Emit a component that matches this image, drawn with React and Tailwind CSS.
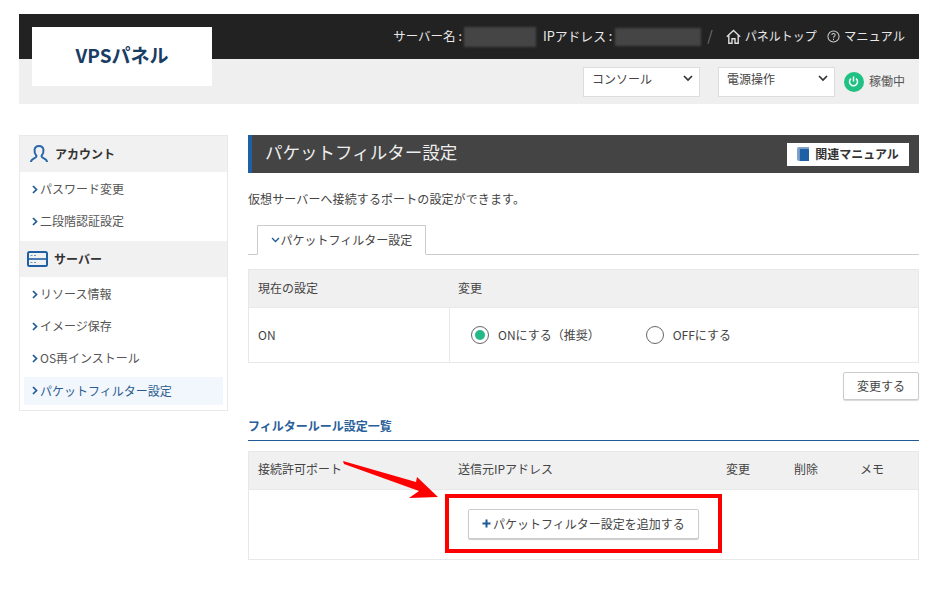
import React from "react";

function Chevron() {
  return (
    <svg width="6" height="9" viewBox="0 0 6 9" fill="none">
      <path d="M1 1l3.500 3.500L1 8" stroke="#1f5a96" strokeWidth="1.700" />
    </svg>
  );
}

function NavItem({ label, active }) {
  return (
    <div className={`flex items-center h-[28px] mx-[4px] pl-[8px] gap-[2px] text-[12px] ${active ? "bg-[#f2f7fd] text-[#2b5c8f] pb-[1px]" : "text-[#555] pb-[2px]"}`}>
      <Chevron />
      <span>{label}</span>
    </div>
  );
}

function Caret() {
  return (
    <svg width="10" height="7" viewBox="0 0 10 7" fill="none">
      <path d="M1 1l4 4 4-4" stroke="#333" strokeWidth="1.700" />
    </svg>
  );
}

function Select({ label }) {
  return (
    <div className="w-[117px] h-[30px] bg-white border border-[#ddd] flex items-center justify-between pl-[8px] pr-[6px] pb-[6px] text-[12px] text-[#444]">
      <span>{label}</span>
      <Caret />
    </div>
  );
}

function Radio({ checked, label }) {
  return (
    <div className="flex items-center gap-[9px]">
      <span className="w-[18px] h-[18px] rounded-full border border-[#666] flex items-center justify-center bg-white">
        {checked && <span className="w-[10px] h-[10px] rounded-full bg-[#25b98a]" />}
      </span>
      <span className="pb-[1px]">{label}</span>
    </div>
  );
}

export default function App() {
  return (
    <div className="relative w-[936px] h-[594px] bg-white overflow-hidden text-[#444] font-['Noto_Sans_CJK_JP','Noto_Sans',sans-serif]">
      <div className="pt-[14px] pl-[19px] w-[936px]">
        {/* Header */}
        <header className="relative w-[900px]">
          <div className="h-[45px] bg-[#222] flex items-center justify-end pr-[14px] text-[12px] text-[#e8e8e8]">
            <span className="pb-[1px] text-[12.500px]">サーバー名 :</span>
            <span className="w-[72px] h-[20px] bg-[#454545] blur-[1px] ml-[2px] mr-[7px]" />
            <span className="pb-[1px] text-[12.800px]">IPアドレス :</span>
            <span className="w-[86px] h-[18px] bg-[#454545] blur-[1px] ml-[3px]" />
            <span className="text-[#777] ml-[6px] mr-[13px] text-[14px] pb-[2px]">/</span>
            <svg width="15" height="15" viewBox="0 0 15 15" fill="none" stroke="#ddd" strokeWidth="1.400">
              <path d="M.8 7.800L7.500 1.500l6.700 6.300M2.800 6.500v7.800h3.200V9.800h3v4.500h3.200V6.500" />
            </svg>
            <span className="ml-[4px] mr-[10px] pb-[1px]">パネルトップ</span>
            <svg width="13" height="13" viewBox="0 0 14 14" fill="none" stroke="#ccc" strokeWidth="1.100">
              <circle cx="7" cy="7" r="6" />
              <path d="M5.200 5.500c0-2.300 3.600-2.300 3.600 0 0 1.400-1.800 1.300-1.800 2.800M7 9.400v1.300" />
            </svg>
            <span className="ml-[4px] pb-[1px] text-[12.300px]">マニュアル</span>
          </div>
          <div className="h-[45px] bg-[#efefef] flex items-center justify-end pr-[14px]">
            <div className="flex items-center gap-[18px]">
              <Select label="コンソール" />
              <Select label="電源操作" />
            </div>
            <div className="flex items-center gap-[5px] ml-[9px] text-[12px] text-[#555]">
              <span className="w-[20px] h-[20px] rounded-full bg-[#1fc283] flex items-center justify-center">
                <svg width="11" height="11" viewBox="0 0 11 11" fill="none" stroke="#fff" strokeWidth="1.500">
                  <path d="M3 2.600a4 4 0 1 0 5 0M5.500 0.500v5" />
                </svg>
              </span>
              <span className="pb-[2px]">稼働中</span>
            </div>
          </div>
          <div className="absolute left-[13px] top-[13px] w-[180px] h-[59px] bg-white flex items-center justify-center pb-[2px] text-[19px] font-bold text-[#1a3d63]">
            VPSパネル
          </div>
        </header>

        <div className="flex mt-[31px] gap-[20px] w-[900px]">
          {/* Sidebar */}
          <aside className="w-[209px] h-[276px] border border-[#e9e9e9] shrink-0">
            <div className="h-[36px] bg-[#f1f1f1] flex items-center pl-[10px] gap-[7px] text-[12px] font-bold text-[#333]">
              <svg width="18" height="18" viewBox="0 0 18 18" fill="none" stroke="#2a66a8" strokeWidth="2">
                <path d="M1 17c0-3.500 5.500-3.500 5.500-6C3.500 7.500 3.500 1 9 1s5.500 6.500 2.500 10c0 2.500 5.500 2.500 5.500 6" />
              </svg>
              <span className="pb-[1px]">アカウント</span>
            </div>
            <div className="pt-[4px] pb-[5px] flex flex-col gap-[4px]">
              <NavItem label="パスワード変更" />
              <NavItem label="二段階認証設定" />
            </div>
            <div className="h-[36px] bg-[#f1f1f1] flex items-center pl-[7px] gap-[6px] text-[12px] font-bold text-[#333]">
              <svg width="21" height="16" viewBox="0 0 21 16" fill="none">
                <rect x="1" y="1" width="19" height="14" rx="1.500" stroke="#1f5fa3" strokeWidth="2" />
                <path d="M1 8h19" stroke="#1f5fa3" strokeWidth="1.600" />
                <path d="M3.500 4.500h2M7 4.500h2M3.500 11.500h2M7 11.500h2" stroke="#6d94bf" strokeWidth="1.200" />
              </svg>
              <span className="pb-[1px]">サーバー</span>
            </div>
            <div className="pt-[4px] flex flex-col gap-[4px]">
              <NavItem label="リソース情報" />
              <NavItem label="イメージ保存" />
              <NavItem label="OS再インストール" />
              <NavItem label="パケットフィルター設定" active />
            </div>
          </aside>

          {/* Main */}
          <main className="w-[671px] text-[12px]">
            <div className="h-[38px] bg-[#444] border-l-[4px] border-[#1f5fa3] flex items-center justify-between pl-[13px] pr-[10px]">
              <span className="text-[17.500px] text-[#eee] pb-[3px]">パケットフィルター設定</span>
              <span className="w-[122px] h-[23px] bg-white flex items-center justify-center gap-[6px] pb-[1px] text-[12px] font-bold text-[#333]">
                <svg width="12" height="14" viewBox="0 0 12 14" className="mt-[1px]">
                  <path d="M0 2a2 2 0 0 1 2-2h10v2H2.500v12H2a2 2 0 0 1-2-2z" fill="#7fa3c8" />
                  <rect x="2.500" y="2" width="9.500" height="12" rx="0.500" fill="#1f5fa3" />
                </svg>
                関連マニュアル
              </span>
            </div>

            <p className="mt-[16px] leading-[20px] tracking-[0.1px] text-[#444]">仮想サーバーへ接続するポートの設定ができます。</p>

            <div className="mt-[16px] h-[30px] border-b border-[#ccc] pl-[9px]">
              <div className="w-[169px] h-[30px] border border-[#ccc] border-b-white bg-white flex items-center justify-center gap-[1px] text-[#444]">
                <svg width="9" height="6" viewBox="0 0 9 6" fill="none">
                  <path d="M1 1l3.500 3.500L8 1" stroke="#1f5a96" strokeWidth="1.300" />
                </svg>
                パケットフィルター設定
              </div>
            </div>

            <div className="mt-[14px] border border-[#e8e8e8]">
              <div className="h-[38px] bg-[#f0f0f0] flex items-center border-b border-[#e8e8e8] pb-[2px]">
                <span className="w-[201px] pl-[9px]">現在の設定</span>
                <span className="pl-[8px]">変更</span>
              </div>
              <div className="h-[54px] flex">
                <div className="w-[201px] pl-[9px] flex items-center border-r border-[#e8e8e8]">ON</div>
                <div className="flex items-center pl-[21px] gap-[46px]">
                  <Radio checked label="ONにする（推奨）" />
                  <Radio label="OFFにする" />
                </div>
              </div>
            </div>

            <div className="flex justify-end mt-[9px]">
              <button className="w-[76px] h-[28px] bg-white border border-[#ccc] rounded-[2px] shadow-[0_1px_1px_rgba(0,0,0,0.15)] text-[12px] text-[#444]">
                変更する
              </button>
            </div>

            <div className="mt-[16px] h-[25px] border-b border-[#1f5a96] text-[12px] font-bold text-[#2a6099] leading-[20px]">
              フィルタールール設定一覧
            </div>

            <div className="mt-[10px] border border-[#e8e8e8]">
              <div className="h-[38px] bg-[#f0f0f0] flex items-center border-b border-[#e8e8e8] pb-[3px]">
                <span className="w-[201px] pl-[9px]">接続許可ポート</span>
                <span className="w-[269px] pl-[8px]">送信元IPアドレス</span>
                <span className="w-[68px] pl-[7px]">変更</span>
                <span className="w-[66px] pl-[7px]">削除</span>
                <span className="pl-[7px]">メモ</span>
              </div>
              <div className="h-[69px] flex items-start justify-center pt-[4px]">
                <div className="w-[277px] h-[59px] border-[4px] border-[#f00] flex items-center justify-center">
                  <button className="w-[231px] h-[30px] bg-white border border-[#ccc] rounded-[2px] shadow-[0_1px_1px_rgba(0,0,0,0.2)] flex items-center justify-center gap-[2px] text-[12px] text-[#444]">
                    <svg width="9" height="9" viewBox="0 0 9 9" fill="none">
                      <path d="M4.500 0.500v8M0.500 4.500h8" stroke="#1f5a96" strokeWidth="2" />
                    </svg>
                    パケットフィルター設定を追加する
                  </button>
                </div>
              </div>
            </div>
          </main>
        </div>
      </div>

      {/* Annotation arrow */}
      <svg className="absolute left-0 top-0 pointer-events-none" width="936" height="594" viewBox="0 0 936 594">
        <polygon points="343,461 416,482 417,477 438,497 409,498 419,491 344,464" fill="#f00" />
      </svg>
    </div>
  );
}
